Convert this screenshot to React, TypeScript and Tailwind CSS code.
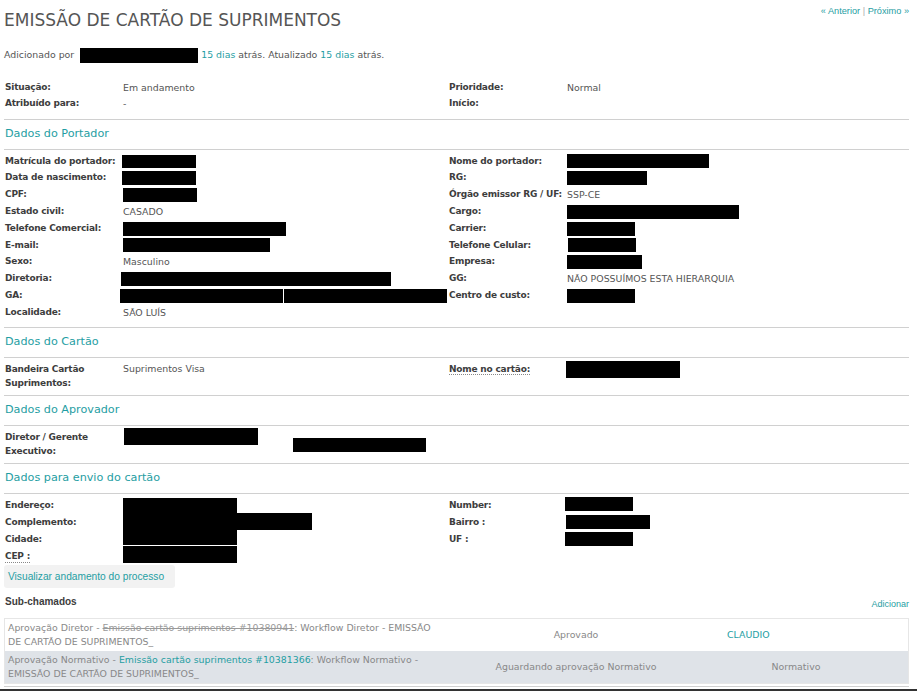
import React from 'react';

const Box: React.FC<{ className?: string }> = ({ className = '' }) => (
  <span className={`inline-block bg-black shrink-0 ${className}`} />
);

type Cell = React.ReactNode;

const Label: React.FC<{ children: React.ReactNode }> = ({ children }) => (
  <div className="pl-[1px] font-bold text-[9px] tracking-[-0.2px] text-[#3d3d3d] flex items-center">{children}</div>
);

const Value: React.FC<{ children?: React.ReactNode }> = ({ children }) => (
  <div className="flex items-center text-[9.4px] text-[#555]">{children}</div>
);

const Rows: React.FC<{ rows: [Cell, Cell, Cell?, Cell?][]; rowClass: string }> = ({ rows, rowClass }) => (
  <div className={`grid grid-cols-[119px_325px_119px_1fr] ${rowClass}`}>
    {rows.map((r, i) => (
      <React.Fragment key={i}>
        <Label>{r[0]}</Label>
        <Value>{r[1]}</Value>
        <Label>{r[2]}</Label>
        <Value>{r[3]}</Value>
      </React.Fragment>
    ))}
  </div>
);

const Hr = () => <div className="h-px bg-[#d0d0d0]" />;

const Heading: React.FC<{ children: React.ReactNode }> = ({ children }) => (
  <div className="h-[29px] flex items-center pl-[1px] text-[11.2px] text-[#1f9ea3]">{children}</div>
);

export default function App() {
  return (
    <div className="w-[917px] h-[692px] overflow-hidden bg-white font-['DejaVu_Sans',sans-serif] text-[#555]">
      <div className="pl-[4px] pr-[8px] pt-[4px]">
        {/* cabeçalho */}
        <div className="flex justify-between items-start">
          <h2 className="mt-[6px] text-[17px] leading-[20px] text-[#555]">EMISSÃO DE CARTÃO DE SUPRIMENTOS</h2>
          <div className="font-['Liberation_Sans',sans-serif] text-[9.2px] leading-[14px] text-[#1f9ea3]">
            « Anterior <span className="text-[#aaa]">|</span> Próximo »
          </div>
        </div>

        <div className="mt-[17px] h-[16px] flex items-center text-[9.4px]">
          <span>Adicionado por&nbsp;</span>
          <Box className="w-[118px] h-[15px] ml-[3px]" />
          <span className="ml-[3px] text-[#1f9ea3]">15 dias</span>
          <span>&nbsp;atrás. Atualizado&nbsp;</span>
          <span className="text-[#1f9ea3]">15 dias</span>
          <span>&nbsp;atrás.</span>
        </div>

        <div className="mt-[17px] mb-[7px]">
          <Rows
            rowClass="auto-rows-[16px]"
            rows={[
              ['Situação:', 'Em andamento', 'Prioridade:', 'Normal'],
              ['Atribuído para:', '-', 'Início:', ''],
            ]}
          />
        </div>

        {/* Dados do Portador */}
        <Hr />
        <Heading>Dados do Portador</Heading>
        <Hr />
        <div className="pt-[3px] pb-[6px]">
          <Rows
            rowClass="auto-rows-[16.8px]"
            rows={[
              ['Matrícula do portador:', <Box className="w-[74px] h-[13px] ml-[-1px]" />, 'Nome do portador:', <Box className="w-[142px] h-[14px]" />],
              ['Data de nascimento:', <Box className="w-[74px] h-[14px] ml-[-1px]" />, 'RG:', <Box className="w-[80px] h-[14px]" />],
              ['CPF:', <Box className="w-[74px] h-[14px]" />, 'Órgão emissor RG / UF:', 'SSP-CE'],
              ['Estado civil:', 'CASADO', 'Cargo:', <Box className="w-[172px] h-[14px]" />],
              ['Telefone Comercial:', <Box className="w-[163px] h-[14px]" />, 'Carrier:', <Box className="w-[68px] h-[14px]" />],
              ['E-mail:', <Box className="w-[147px] h-[14px]" />, 'Telefone Celular:', <Box className="w-[68px] h-[14px] ml-[1px]" />],
              ['Sexo:', 'Masculino', 'Empresa:', <Box className="w-[75px] h-[14px]" />],
              ['Diretoria:', <Box className="w-[270px] h-[14px] ml-[-2px]" />, 'GG:', 'NÃO POSSUÍMOS ESTA HIERARQUIA'],
              [
                'GA:',
                <>
                  <Box className="w-[163px] h-[14px] ml-[-3px]" />
                  <Box className="w-[163px] h-[14px] ml-px" />
                </>,
                'Centro de custo:',
                <Box className="w-[68px] h-[14px]" />,
              ],
              ['Localidade:', 'SÃO LUÍS', '', ''],
            ]}
          />
        </div>

        {/* Dados do Cartão */}
        <Hr />
        <Heading>Dados do Cartão</Heading>
        <Hr />
        <div className="pt-[4px] pb-[5px] grid grid-cols-[119px_325px_119px_1fr] leading-[14px]">
          <div className="pl-[1px] font-bold text-[9px] tracking-[-0.2px] text-[#3d3d3d]">Bandeira Cartão Suprimentos:</div>
          <div className="text-[9.4px]">Suprimentos Visa</div>
          <div className="pl-[1px] font-bold text-[9px] tracking-[-0.2px] text-[#3d3d3d]">
            <span className="border-b border-dotted border-[#888]">Nome no cartão:</span>
          </div>
          <div className="ml-[-1px] mt-[-1px]">
            <Box className="w-[114px] h-[17px]" />
          </div>
        </div>

        {/* Dados do Aprovador */}
        <Hr />
        <Heading>Dados do Aprovador</Heading>
        <Hr />
        <div className="pt-[4px] pb-[5px] grid grid-cols-[119px_325px_119px_1fr] leading-[14px]">
          <div className="pl-[1px] font-bold text-[9px] tracking-[-0.2px] text-[#3d3d3d]">Diretor / Gerente Executivo:</div>
          <div className="flex items-start">
            <Box className="w-[134px] h-[17px] ml-px mt-[-2px]" />
            <Box className="w-[133px] h-[14px] ml-[35px] mt-[8px]" />
          </div>
          <div />
          <div />
        </div>

        {/* Dados para envio do cartão */}
        <Hr />
        <Heading>Dados para envio do cartão</Heading>
        <Hr />
        <div className="pt-[3px] grid grid-cols-[119px_325px_119px_1fr] auto-rows-[17px]">
          <Label>Endereço:</Label>
          <div className="flex items-start pt-[1px]"><Box className="w-[114px] h-[16px]" /></div>
          <Label>Number:</Label>
          <div className="flex items-start ml-[-2px]"><Box className="w-[68px] h-[14px]" /></div>

          <Label>Complemento:</Label>
          <div className="flex items-start">
            <Box className="w-[114px] h-[17px] mt-[-1px]" />
            <Box className="w-[75px] h-[17px] mt-[-1px]" />
          </div>
          <Label>Bairro :</Label>
          <div className="flex items-start pt-[1px] ml-[-1px]"><Box className="w-[84px] h-[14px]" /></div>

          <Label>Cidade:</Label>
          <div className="flex items-start"><Box className="w-[114px] h-[15px] mt-[-1px]" /></div>
          <Label>UF :</Label>
          <div className="flex items-start pt-[1px] ml-[-2px]"><Box className="w-[68px] h-[14px]" /></div>

          <Label>
            <span className="border-b border-dotted border-[#888] leading-[12px]">CEP :</span>
          </Label>
          <div className="flex items-start"><Box className="w-[114px] h-[17px] mt-[-2px]" /></div>
          <div />
          <div />
        </div>

        <div className="h-[23px] w-[171px] bg-[#f2f2f2] rounded-[3px] pl-[4px] flex items-center font-['Liberation_Sans',sans-serif] text-[10.2px] text-[#1f9ea3]">
          Visualizar andamento do processo
        </div>

        <div className="mt-[6px] h-[16px] flex justify-between items-end font-['Liberation_Sans',sans-serif]">
          <span className="pl-[1px] self-center font-bold text-[10px] text-[#3d3d3d]">Sub-chamados</span>
          <span className="text-[9px] text-[#1f9ea3] leading-[12px]">Adicionar</span>
        </div>

        {/* tabela de sub-chamados */}
        <div className="mt-[8px] border border-[#e6e6e6] text-[9.4px] leading-[14px] text-[#888]">
          <div className="h-[32px] flex items-center bg-white">
            <div className="w-[444px] pl-[3px] pr-[4px]">
              Aprovação Diretor - <span className="line-through text-[#999]">Emissão cartão suprimentos #10380941</span>: Workflow Diretor - EMISSÃO DE CARTÃO DE SUPRIMENTOS_
            </div>
            <div className="w-[254px] text-center">Aprovado</div>
            <div className="w-[186px] pl-[24px] text-[#1f9ea3]">CLAUDIO</div>
          </div>
          <div className="h-[32px] flex items-center bg-[#dfe3e8]">
            <div className="w-[444px] pl-[3px] pr-[4px]">
              Aprovação Normativo - <span className="text-[#1f9ea3]">Emissão cartão suprimentos #10381366</span>: Workflow Normativo - EMISSÃO DE CARTÃO DE SUPRIMENTOS_
            </div>
            <div className="w-[254px] text-center">Aguardando aprovação Normativo</div>
            <div className="w-[186px] text-center">Normativo</div>
          </div>
        </div>
        <div className="mt-[2px] h-px bg-[#d0d0d0]" />
      </div>
      <div className="mt-[2px] h-[2px] bg-[#333]" />
    </div>
  );
}
